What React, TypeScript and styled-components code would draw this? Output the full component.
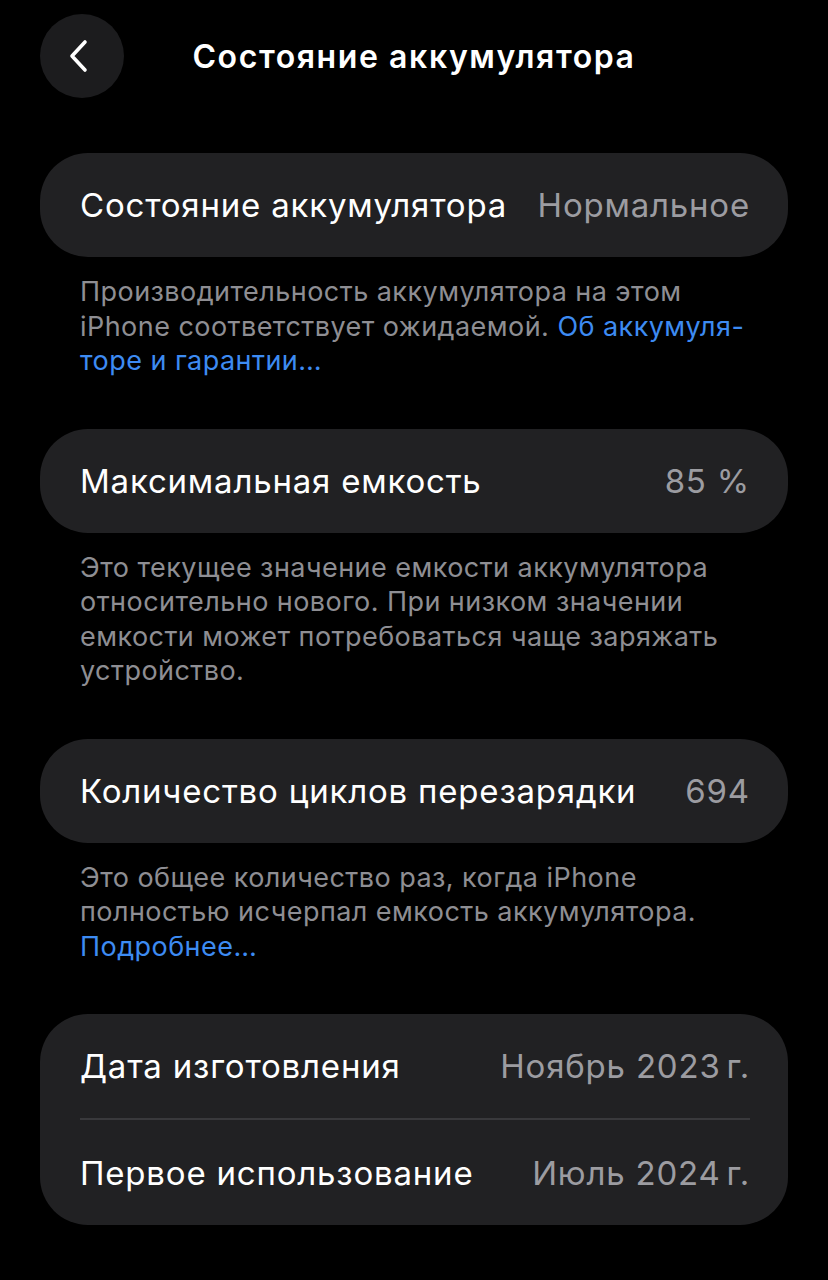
import React from 'react';
import styled, { createGlobalStyle } from 'styled-components';

interface Row {
  label: string;
  value: string;
}

interface Line {
  text: string;
  link?: string;
}

interface Section {
  id: number;
  rows: Row[];
  footer?: Line[];
}

const sections: Section[] = [
  {
    id: 1,
    rows: [{ label: 'Состояние аккумулятора', value: 'Нормальное' }],
    footer: [
      { text: 'Производительность аккумулятора на этом' },
      { text: 'iPhone соответствует ожидаемой. ', link: 'Об аккумуля-' },
      { text: '', link: 'торе и гарантии…' },
    ],
  },
  {
    id: 2,
    rows: [{ label: 'Максимальная емкость', value: '85 %' }],
    footer: [
      { text: 'Это текущее значение емкости аккумулятора' },
      { text: 'относительно нового. При низком значении' },
      { text: 'емкости может потребоваться чаще заряжать' },
      { text: 'устройство.' },
    ],
  },
  {
    id: 3,
    rows: [{ label: 'Количество циклов перезарядки', value: '694' }],
    footer: [
      { text: 'Это общее количество раз, когда iPhone' },
      { text: 'полностью исчерпал емкость аккумулятора.' },
      { text: '', link: 'Подробнее…' },
    ],
  },
  {
    id: 4,
    rows: [
      { label: 'Дата изготовления', value: 'Ноябрь 2023\u202Fг.' },
      { label: 'Первое использование', value: 'Июль 2024\u202Fг.' },
    ],
  },
];

const BatteryHealth: React.FC = () => {
  return (
    <Screen>
      <GlobalStyle />
      <Header>
        <BackButton aria-label="Назад">
          <svg width="30" height="38" viewBox="0 0 30 38" fill="none">
            <path
              d="M20 5 L7 19 L20 33"
              stroke="#fff"
              strokeWidth="3.6"
              strokeLinecap="round"
              strokeLinejoin="round"
            />
          </svg>
        </BackButton>
        <Title>Состояние аккумулятора</Title>
        <span />
      </Header>

      {sections.map(section => (
        <Group key={section.id} last={section.id === sections.length}>
          <Card>
            {section.rows.map((row, i) => (
              <CardRow key={row.label} divided={i > 0}>
                <Label>{row.label}</Label>
                <Value>{row.value}</Value>
              </CardRow>
            ))}
          </Card>
          {section.footer && (
            <Footer>
              {section.footer.map((line, i) => (
                <FooterLine key={i}>
                  {line.text}
                  {line.link && <Link>{line.link}</Link>}
                </FooterLine>
              ))}
            </Footer>
          )}
        </Group>
      ))}
    </Screen>
  );
};

export default BatteryHealth;

const GlobalStyle = createGlobalStyle`
  html, body {
    margin: 0;
    padding: 0;
    background: #000;
  }
  body {
    font-family: Inter, "Noto Sans", "Liberation Sans", sans-serif;
    -webkit-font-smoothing: antialiased;
  }
`;

const Screen = styled.div`
  width: 828px;
  height: 1280px;
  box-sizing: border-box;
  padding: 14px 40px 0;
  background: #000;
  color: #fff;
  overflow: hidden;
`;

const Header = styled.div`
  display: grid;
  grid-template-columns: 84px 1fr 84px;
  align-items: center;
  height: 84px;
  margin-bottom: 55px;
`;

const BackButton = styled.button`
  width: 84px;
  height: 84px;
  border-radius: 50%;
  border: none;
  padding: 0 4px 0 0;
  background: #1c1c1e;
  display: flex;
  align-items: center;
  justify-content: center;
`;

const Title = styled.h1`
  margin: 0;
  text-align: center;
  font-size: 32px;
  font-weight: 600;
  letter-spacing: 1.6px;
  color: #fff;
`;

const Group = styled.section<{ last?: boolean }>`
  margin-bottom: ${props => (props.last ? 0 : 50)}px;
`;

const Card = styled.div`
  background: #212123;
  border-radius: 48px;
  padding: 0 38px 0 40px;
`;

const CardRow = styled.div<{ divided?: boolean }>`
  display: flex;
  align-items: center;
  justify-content: space-between;
  gap: 24px;
  height: ${props => (props.divided ? 105 : 104)}px;
  border-top: ${props => (props.divided ? '2px solid #39393c' : 'none')};
`;

const Label = styled.span`
  font-size: 33px;
  font-weight: 400;
  letter-spacing: 0.8px;
  color: #fff;
  white-space: nowrap;
`;

const Value = styled.span`
  font-size: 33px;
  font-weight: 400;
  letter-spacing: 0.8px;
  color: #9c9ca1;
  white-space: nowrap;
`;

const Footer = styled.div`
  padding: 0 40px;
  margin-top: 18px;
`;

const FooterLine = styled.div`
  font-size: 27px;
  line-height: 34.5px;
  letter-spacing: 0.45px;
  color: #8e8e93;
  white-space: nowrap;
`;

const Link = styled.span`
  color: #3d8bf2;
`;
